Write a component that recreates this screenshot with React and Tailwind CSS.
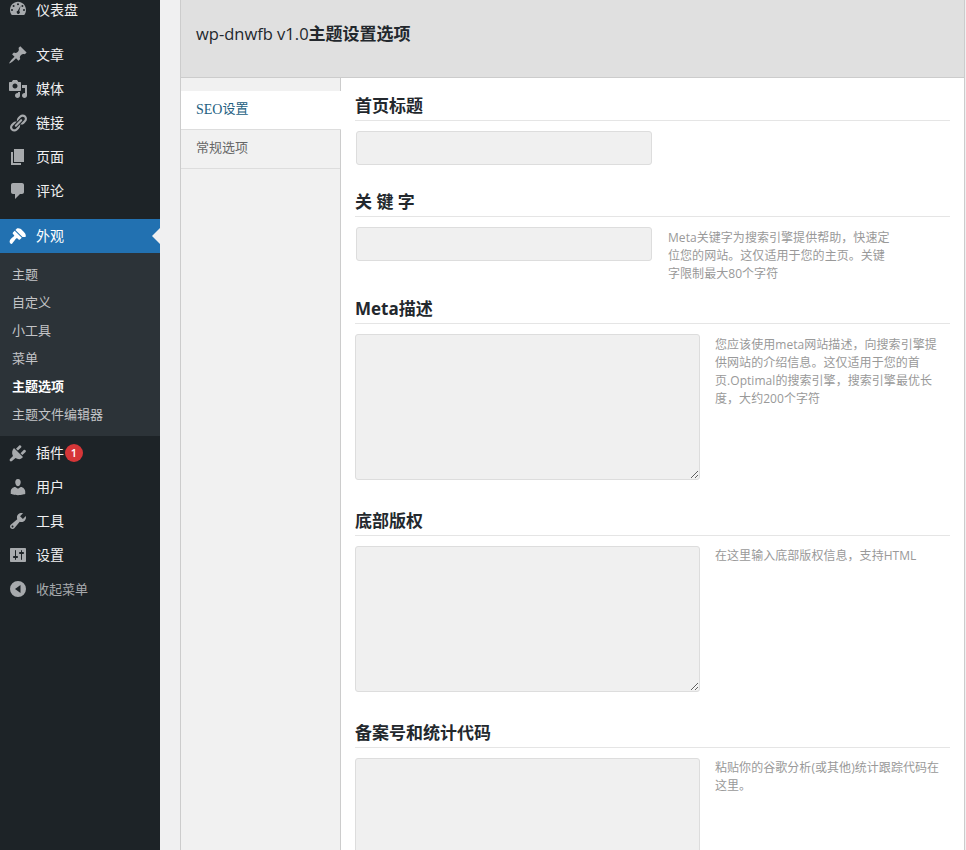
const FONT = "font-['Open_Sans','Noto_Sans_CJK_SC',sans-serif]";

// admin menu glyphs, drawn on a 20x20 box
const ICONS = {
  dashboard: 'M3.8 16h12.400c1.100-1.400 1.800-3.200 1.800-5.100C18 6.300 14.400 2.700 10 2.700S2 6.300 2 10.900c0 1.900.7 3.700 1.800 5.100zM10 4.300a1 1 0 1 1 0 2 1 1 0 0 1 0-2zM5.600 6a1 1 0 1 1 0 2 1 1 0 0 1 0-2zM14.400 6a1 1 0 1 1 0 2 1 1 0 0 1 0-2zM4 10a1 1 0 1 1 0 2 1 1 0 0 1 0-2zM16 10a1 1 0 1 1 0 2 1 1 0 0 1 0-2zM12.600 6.800l-1.300 5.300a1.600 1.600 0 1 1-1.500-.3z',
  post: 'M10.440 3.020l1.820-1.820 6.360 6.350-1.830 1.820c-1.050-.68-2.480-.57-3.410.36l-.75.75c-.92.93-1.040 2.350-.35 3.410l-1.830 1.820-2.410-2.410-2.800 2.790c-.42.42-3.380 2.710-3.800 2.290s1.860-3.390 2.280-3.810l2.790-2.790L4.100 9.360l1.830-1.820c1.050.69 2.480.57 3.410-.36l.75-.75c.93-.92 1.040-2.350.35-3.410z',
  media: 'M13 11V4c0-.55-.45-1-1-1h-1.670L9 1H5L3.670 3H2c-.55 0-1 .45-1 1v7c0 .55.45 1 1 1h10c.55 0 1-.45 1-1zM7 4.500c1.380 0 2.500 1.120 2.500 2.500S8.380 9.500 7 9.500 4.500 8.380 4.500 7 5.620 4.500 7 4.500zM14 6h5v10.500c0 1.380-1.120 2.500-2.500 2.500S14 17.880 14 16.500s1.120-2.500 2.500-2.500c.17 0 .34.020.5.050V9h-3V6zm-4 8.050V13h2v3.500c0 1.380-1.120 2.500-2.500 2.500S7 17.880 7 16.500 8.120 14 9.500 14c.17 0 .34.020.5.050z',
  links: 'M17.740 2.760c1.680 1.690 1.680 4.410 0 6.100l-1.530 1.520c-1.120 1.120-2.700 1.470-4.140 1.090l2.620-2.610.76-.77.76-.76c.84-.84.84-2.200 0-3.040-.84-.85-2.200-.85-3.040 0l-.77.76-3.380 3.380c-.37-1.440-.02-3.020 1.100-4.140l1.520-1.530c1.690-1.680 4.420-1.680 6.100 0zM8.590 13.430l5.340-5.340c.42-.42.42-1.100 0-1.520-.44-.43-1.130-.39-1.520 0l-5.340 5.340c-.42.42-.42 1.100 0 1.520.44.43 1.130.39 1.520 0zm-.76 2.290l4.140-4.140c.38 1.440.03 3.020-1.090 4.140l-1.520 1.530c-1.690 1.680-4.410 1.680-6.100 0-1.680-1.680-1.680-4.420 0-6.100l1.530-1.520c1.120-1.120 2.700-1.470 4.140-1.100l-4.140 4.150c-.85.84-.85 2.200 0 3.050.84.84 2.200.84 3.040 0z',
  page: 'M6 15V2h10v13H6zm-1 1h8v2H3V5h2v11z',
  comments: 'M5 2h9c1.100 0 2 .9 2 2v7c0 1.100-.9 2-2 2h-2l-5 5v-5H5c-1.100 0-2-.9-2-2V4c0-1.100.9-2 2-2z',
  appearance: 'M14.480 11.060L7.410 3.990l1.500-1.500c.5-.56 2.300-.47 3.510.32 1.210.8 1.430 1.280 2.420 2.280 1 .99 1.490 1.210 2.280 2.420.79 1.210.88 3.010.32 3.510zM13.770 11.770L6.700 4.700 4.930 6.470c-.39.39-.39 1.020 0 1.410l1.060 1.060c.39.39.39 1.030 0 1.420-.6.6-1.430 1.110-2.210 1.690-.35.26-.7.53-1.010.84C1.600 14 1 16 2.500 17.500S4.400 16.900 5.570 15.690C5.900 15.380 6.150 15.030 6.410 14.680 6.990 13.900 7.500 13.070 8.100 12.470 8.490 12.080 9.130 12.080 9.520 12.470L10.580 13.530C10.970 13.920 11.600 13.920 11.990 13.530z',
  plugins: 'M11.200 2.500l-3.200 3.200 1.900 1.900 3.200-3.200c.5-.5.4-1.200-.1-1.700s-1.300-.7-1.800-.2zM15.700 7l-3.200 3.200 1.900 1.900 3.200-3.200c.5-.5.4-1.200-.1-1.700s-1.300-.7-1.800-.2zM6 5l9 9c-1 1.500-3 2.500-5 2-1-.2-1.800-.6-2.500-1L4 18c-.6.5-1.500.5-2 0s-.5-1.400 0-2l3-3C3.500 10.500 4 7 6 5z',
  users: 'M10 9.250c-2.270 0-2.730-3.440-2.730-3.440C7 4.020 7.820 2 9.970 2c2.160 0 2.980 2.020 2.710 3.810 0 0-.41 3.440-2.680 3.440zm0 2.570L12.720 10c2.390 0 4.520 2.330 4.520 4.530v2.490s-3.650 1.130-7.240 1.130c-3.650 0-7.240-1.130-7.240-1.130v-2.490c0-2.250 1.940-4.480 4.470-4.480z',
  tools: 'M16.680 9.770c-1.340 1.340-3.300 1.670-4.950.99l-5.410 6.520c-.99.99-2.590.99-3.570 0-.99-.98-.99-2.580 0-3.570l6.520-5.420c-.68-1.650-.35-3.610.99-4.950 1.280-1.280 3.120-1.620 4.720-1.060l-2.890 2.890 2.820 2.820 2.860-2.870c.53 1.580.18 3.390-1.090 4.670zM3.810 16.210c.4.39 1.030.39 1.420 0 .4-.4.4-1.030 0-1.430-.39-.39-1.020-.39-1.420 0-.39.4-.39 1.030 0 1.430z',
  settings: 'M18 16V4c0-.55-.45-1-1-1H3c-.55 0-1 .45-1 1v12c0 .55.45 1 1 1h14c.55 0 1-.45 1-1zM8 11h1c.55 0 1 .45 1 1s-.45 1-1 1H8v1.500c0 .28-.22.5-.5.5s-.5-.22-.5-.5V13H6c-.55 0-1-.45-1-1s.45-1 1-1h1V5.500c0-.28.22-.5.5-.5s.5.22.5.5V11zm5-2h-1c-.55 0-1-.45-1-1s.45-1 1-1h1V5.500c0-.28.22-.5.5-.5s.5.22.5.5V7h1c.55 0 1 .45 1 1s-.45 1-1 1h-1v5.500c0 .28-.22.5-.5.5s-.5-.22-.5-.5V9z',
  collapse: 'M10 2a8 8 0 1 1 0 16 8 8 0 0 1 0-16zM12.500 6L7 10l5.500 4z',
};

function Glyph({ name }) {
  return (
    <svg viewBox="0 0 20 20" className="w-5 h-5" fill="currentColor" fillRule="evenodd">
      <path d={ICONS[name]} />
    </svg>
  );
}

const TOP_MENU = [
  { label: '文章', icon: 'post' },
  { label: '媒体', icon: 'media' },
  { label: '链接', icon: 'links' },
  { label: '页面', icon: 'page' },
  { label: '评论', icon: 'comments' },
];

const SUB_MENU = ['主题', '自定义', '小工具', '菜单', '主题选项', '主题文件编辑器'];

const BOTTOM_MENU = [
  { label: '插件', icon: 'plugins', badge: 1 },
  { label: '用户', icon: 'users' },
  { label: '工具', icon: 'tools' },
  { label: '设置', icon: 'settings' },
];

function MenuItem({ label, icon, badge, textCls = 'pb-[2px]' }) {
  return (
    <div className="flex items-center h-[34px] text-[14px] text-[#f0f0f1]">
      <span className="w-9 pl-[8px] flex items-center text-[#a7aaad]">
        <Glyph name={icon} />
      </span>
      <span className={textCls}>{label}</span>
      {badge && (
        <span className="ml-px w-[18px] h-[18px] rounded-full bg-[#d63638] text-white text-[11px] font-semibold flex items-center justify-center">
          {badge}
        </span>
      )}
    </div>
  );
}

function Sidebar() {
  return (
    <div className="w-40 shrink-0 bg-[#1d2327] -mt-2 pb-[300px]">
      <MenuItem label="仪表盘" icon="dashboard" textCls="" />
      <div className="h-3" />
      {TOP_MENU.map((m) => (
        <MenuItem key={m.label} {...m} />
      ))}
      <div className="h-[11px]" />
      <div className="relative flex items-center h-[34px] bg-[#2271b1] text-white text-[14px]">
        <span className="w-9 pl-[8px] flex items-center">
          <Glyph name="appearance" />
        </span>
        <span className="pb-[2px]">外观</span>
        <span className="absolute right-0 top-[9px] border-y-[8px] border-y-transparent border-r-[8px] border-r-[#f0f0f1]" />
      </div>
      <div className="bg-[#2c3338] pt-[8px] pb-[7px] text-[13px] text-[#c3c4c7]">
        {SUB_MENU.map((s) => (
          <div key={s} className={s === '主题选项' ? 'h-7 pl-3 flex items-center font-bold text-white' : 'h-7 pl-3 flex items-center'}>
            <span className="-mt-px">{s}</span>
          </div>
        ))}
      </div>
      {BOTTOM_MENU.map((m) => (
        <MenuItem key={m.label} {...m} />
      ))}
      <div className="flex items-center h-[34px] text-[13px] text-[#a7aaad]">
        <span className="w-9 pl-[8px] flex items-center">
          <Glyph name="collapse" />
        </span>
        <span className="pt-px">收起菜单</span>
      </div>
    </div>
  );
}

function Section({ title, mb, children }) {
  return (
    <div className={mb}>
      <h3 className="h-[30px] border-b border-[#e5e5e5] text-[17px] font-bold text-[#23282d] leading-[29px]">{title}</h3>
      <div className="mt-2.5 flex items-start">{children}</div>
    </div>
  );
}

function Desc({ children, className }) {
  return <p className={`text-[12px] tracking-[0.05px] leading-[18px] text-[#999] ${className}`}>{children}</p>;
}

const inputCls = 'block ml-px w-[296px] h-[34px] bg-[#f0f0f0] border border-[#ddd] rounded-[3px] outline-none';
const areaCls = 'block w-[345px] h-[146px] bg-[#f0f0f0] border border-[#ddd] rounded-[3px] outline-none';

export default function App() {
  return (
    <div className={`${FONT} flex h-[850px] w-[966px] overflow-hidden bg-[#f0f0f1]`}>
      <Sidebar />
      <div className="ml-5 w-[785px] h-[900px] border-x border-[#ccc] bg-white flex flex-col shrink-0">
        <div className="h-[78px] shrink-0 pl-[15px] pb-[9px] flex items-center bg-[#e0e0e0] border-b border-[#ccc]">
          <h2 className="text-[17px] font-medium text-[#23282d]">
            <span className="text-[16.500px]">wp-dnwfb v1.0</span>
            <span className="font-bold">主题设置选项</span>
          </h2>
        </div>
        <div className="flex flex-1">
          <div className="w-40 shrink-0 bg-[#f1f1f1] border-r border-[#ccc] pt-[13px] text-[13px] font-['Liberation_Serif','Noto_Sans_CJK_SC',serif]">
            <div className="h-[39px] w-40 pl-[15px] pb-[2px] flex items-center bg-white text-[#23607f] border-b border-[#ddd]">
              <span className="text-[14px]">SEO</span>设置
            </div>
            <div className="h-[39px] pl-[15px] pb-[2px] flex items-center text-[#666] border-b border-[#ddd]">常规选项</div>
          </div>
          <div className="flex-1 pl-[14px] pr-[14px] pt-[13px]">
            <Section title="首页标题" mb="mb-[22px]">
              <input className={inputCls} />
            </Section>
            <Section title="关 键 字" mb="mb-[11px]">
              <input className={inputCls} />
              <Desc className="ml-[16px] w-[226px] mt-[2px]">Meta关键字为搜索引擎提供帮助，快速定位您的网站。这仅适用于您的主页。关键字限制最大80个字符</Desc>
            </Section>
            <Section title="Meta描述" mb="mb-[26px]">
              <textarea className={areaCls} />
              <Desc className="ml-[15px] w-[226px] mt-[2px]">您应该使用meta网站描述，向搜索引擎提供网站的介绍信息。这仅适用于您的首页.Optimal的搜索引擎，搜索引擎最优长度，大约200个字符</Desc>
            </Section>
            <Section title="底部版权" mb="mb-[26px]">
              <textarea className={areaCls} />
              <Desc className="ml-[15px] w-[226px] mt-px">在这里输入底部版权信息，支持HTML</Desc>
            </Section>
            <Section title="备案号和统计代码" mb="mb-[26px]">
              <textarea className={areaCls} />
              <Desc className="ml-[15px] w-[226px] mt-px">粘贴你的谷歌分析(或其他)统计跟踪代码在这里。</Desc>
            </Section>
          </div>
        </div>
      </div>
    </div>
  );
}
